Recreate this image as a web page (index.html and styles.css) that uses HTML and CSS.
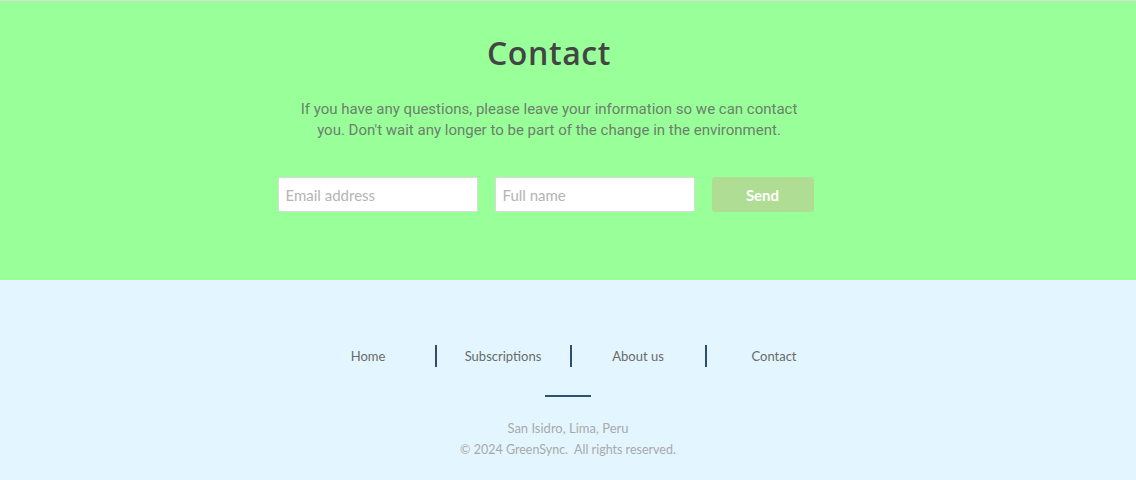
FILE: index.html
```html
<!DOCTYPE html>
<html lang="en">
<head>
<meta charset="utf-8">
<title>Contact</title>
<link rel="stylesheet" href="styles.css">
</head>
<body>
<section class="contact">
  <div class="contact-inner">
    <h2 class="contact-title">Contact</h2>
    <p class="contact-text">If you have any questions, please leave your information so we can contact you. Don't wait any longer to be part of the change in the environment.</p>
    <form class="contact-form">
      <input class="field" type="email" placeholder="Email address">
      <input class="field" type="text" placeholder="Full name">
      <button class="send" type="button">Send</button>
    </form>
  </div>
</section>
<footer class="footer">
  <nav class="footer-nav">
    <a class="nav-item" href="#">Home</a>
    <a class="nav-item" href="#">Subscriptions</a>
    <a class="nav-item" href="#">About us</a>
    <a class="nav-item last" href="#">Contact</a>
  </nav>
  <div class="footer-rule"></div>
  <p class="footer-line">San Isidro, Lima, Peru</p>
  <p class="footer-line">© 2024 GreenSync.&nbsp; All rights reserved.</p>
</footer>
</body>
</html>
```
FILE: styles.css
```css
* { box-sizing: border-box; }
html, body { margin: 0; padding: 0; }
body {
  width: 1136px;
  height: 480px;
  overflow: hidden;
  border-top: 1px solid #dcdcdc;
  font-family: "Lato", "Open Sans", sans-serif;
}
.contact {
  background: #99ff99;
  height: 279px;
}
.contact-inner {
  padding: 33px 38px 0 0;
  display: flex;
  flex-direction: column;
  align-items: center;
}
.contact-title {
  margin: 0;
  font-family: "Open Sans", sans-serif;
  font-weight: 600;
  font-size: 32px;
  line-height: 38px;
  color: #444444;
  letter-spacing: 0.6px;
}
.contact-text {
  margin: 27px 0 0;
  max-width: 504px;
  text-align: center;
  font-family: "Roboto", sans-serif;
  font-size: 15px;
  line-height: 21px;
  color: #6c806c;
}
.contact-form {
  margin-top: 36px;
  padding-right: 7px;
  display: flex;
  gap: 17px;
}
.field {
  width: 200px;
  height: 35px;
  margin: 0;
  border: 1px solid #dadada;
  border-radius: 2px;
  background: #fff;
  padding: 0 7px;
  font-family: "Lato", sans-serif;
  font-size: 15px;
  color: #555;
  outline: none;
}
.field::placeholder { color: #b4b4b4; }
.send {
  width: 102px;
  height: 35px;
  border: none;
  border-radius: 3px;
  background: #b0dd94;
  color: #fff;
  font-family: "Lato", sans-serif;
  font-weight: 700;
  font-size: 15px;
}
.footer {
  background: #e3f6ff;
  height: 200px;
  padding-top: 65px;
  display: flex;
  flex-direction: column;
  align-items: center;
}
.footer-nav {
  display: flex;
  margin-left: 7px;
}
.nav-item {
  width: 135px;
  height: 22px;
  line-height: 22px;
  text-align: center;
  text-decoration: none;
  color: #6a6a6a;
  font-size: 13px;
  border-right: 2px solid #2f4d73;
}
.nav-item.last { border-right: none; }
.footer-rule {
  width: 46px;
  height: 2px;
  margin-top: 28px;
  background: #34506f;
}
.footer-line {
  margin: 0;
  font-size: 13px;
  line-height: 22px;
  color: #a9a9a9;
}
.footer-line + .footer-line { font-size: 12.5px; }
.footer-rule + .footer-line { margin-top: 20px; }
```
